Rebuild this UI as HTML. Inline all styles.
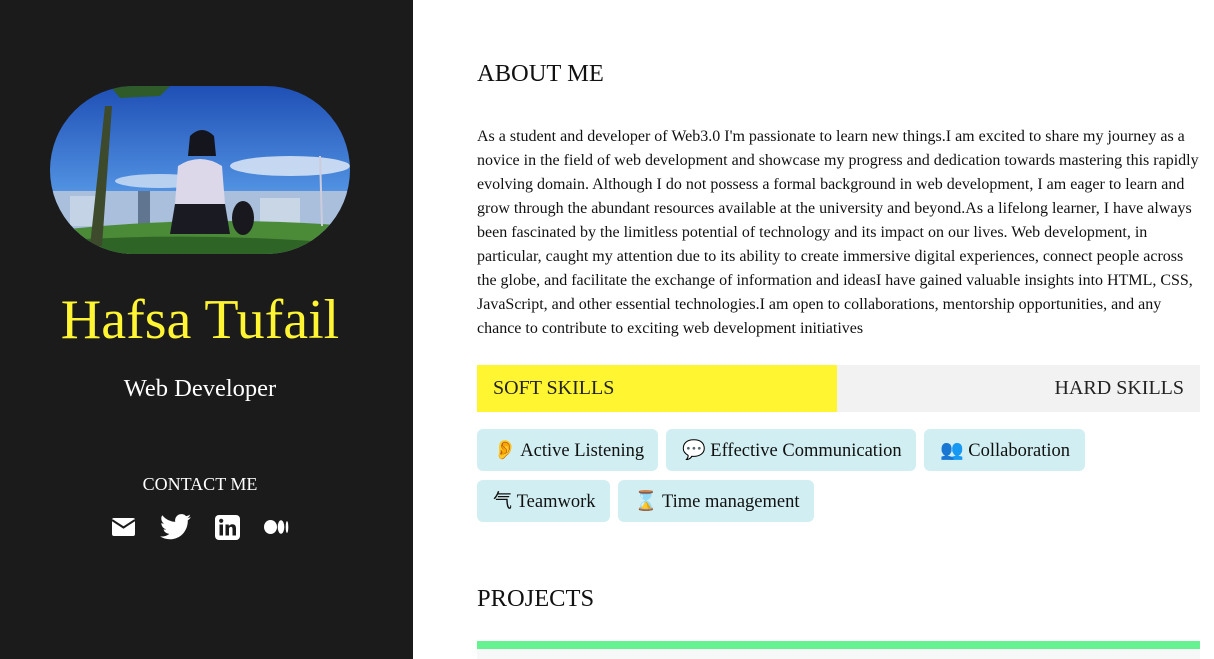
<!DOCTYPE html>
<html><head><meta charset="utf-8">
<style>
*{margin:0;padding:0;box-sizing:border-box}
body{width:1214px;height:659px;overflow:hidden;font-family:"Liberation Serif",serif;background:#fff;position:relative}
#side{position:absolute;left:0;top:0;width:413px;height:659px;background:#1b1b1b}
.pill{position:absolute;left:50px;top:86px;width:300px;height:168px;border-radius:84px;overflow:hidden}
.name{position:absolute;left:0;width:400px;top:285px;text-align:center;color:#fff533;font-size:56px;line-height:70px}
.role{position:absolute;left:0;width:400px;top:374px;text-align:center;color:#fff;font-size:24.5px;line-height:30px}
.contact{position:absolute;left:0;width:400px;top:473px;text-align:center;color:#fff;font-size:18px;line-height:22px}
.icons svg{position:absolute}
#main{position:absolute;left:477px;top:0;width:723px}
h2{font-weight:normal;font-size:24.5px;color:#111;position:absolute;left:0;line-height:30px}
p{position:absolute;left:0;top:125px;width:723px;font-size:16px;line-height:24px;color:#111}
.tabs{position:absolute;top:365px;left:0;width:723px;height:47px;background:#f2f2f2;font-size:20px}
.soft{position:absolute;left:0;top:0;width:360px;height:47px;background:#fff530;padding-left:16px;line-height:47px;color:#222}
.hard{position:absolute;right:16px;top:0;line-height:47px;color:#222}
.chip{position:absolute;height:42px;background:#d1eff2;border-radius:6px;font-size:18.5px;line-height:42px;padding:0 16px;color:#111;white-space:nowrap}
.emo{font-family:"Noto Color Emoji","DejaVu Sans","Noto Sans CJK SC",sans-serif;font-size:19px}
</style></head><body>
<div id="side">
<div class="pill">
<svg width="300" height="168" viewBox="0 0 300 168">
<defs><linearGradient id="sky" x1="0" y1="0" x2="0" y2="1"><stop offset="0" stop-color="#1f4fb5"/><stop offset="0.6" stop-color="#4f8fe0"/><stop offset="1" stop-color="#a6c8ee"/></linearGradient></defs>
<rect width="300" height="168" fill="url(#sky)"/>
<ellipse cx="240" cy="80" rx="60" ry="10" fill="#e6eef8" opacity=".8"/>
<ellipse cx="110" cy="95" rx="45" ry="7" fill="#e6eef8" opacity=".7"/>
<rect x="0" y="105" width="300" height="40" fill="#a9bfdc"/>
<rect x="88" y="105" width="12" height="40" fill="#5f7590"/>
<rect x="20" y="110" width="30" height="30" fill="#c4d3e6"/>
<rect x="210" y="112" width="40" height="30" fill="#c9d6e6"/>
<path d="M0 145 Q150 128 300 140 L300 168 L0 168Z" fill="#4b8a36"/>
<path d="M0 155 Q150 145 300 158 L300 168 L0 168Z" fill="#2f6427"/>
<path d="M40 160 L55 20 L62 20 L52 160Z" fill="#3d4a2c"/>
<path d="M60 0 L120 0 L110 10 L70 12Z" fill="#2f5a2a"/>
<path d="M140 50 Q152 38 164 50 L166 70 L138 70Z" fill="#15151d"/>
<path d="M128 80 Q150 66 172 80 L175 118 L125 118Z" fill="#dcd8ea"/>
<path d="M125 118 L175 118 L180 148 L120 148Z" fill="#1a1a22"/>
<ellipse cx="193" cy="132" rx="11" ry="17" fill="#18181e"/>
<path d="M270 70 L272 140" stroke="#ccd" stroke-width="2"/>
</svg>
</div>
<div class="name">Hafsa Tufail</div>
<div class="role">Web Developer</div>
<div class="contact">CONTACT ME</div>
<div class="icons">
<svg style="left:112px;top:518px" width="23" height="18" viewBox="0 0 23 18"><rect x="0" y="0" width="23" height="18" rx="2" fill="#fff"/><path d="M0 2 L11.5 9.5 L23 2" stroke="#1b1b1b" stroke-width="2" fill="none"/></svg>
<svg style="left:160px;top:514px" width="31" height="26" viewBox="0 0 24 20"><path fill="#fff" d="M24 2.4a9.8 9.8 0 0 1-2.8.8A4.9 4.9 0 0 0 23.3.4a9.9 9.9 0 0 1-3.1 1.2A4.9 4.9 0 0 0 11.8 6 14 14 0 0 1 1.7.9a4.9 4.9 0 0 0 1.5 6.6A4.9 4.9 0 0 1 1 6.9a4.9 4.9 0 0 0 3.9 4.9 4.9 4.9 0 0 1-2.2.1 4.9 4.9 0 0 0 4.6 3.4A9.9 9.9 0 0 1 0 17.3 14 14 0 0 0 7.5 19.5c9.1 0 14-7.5 14-14v-.6A10 10 0 0 0 24 2.4z"/></svg>
<svg style="left:215px;top:515px" width="25" height="25" viewBox="0 0 25 25"><rect width="25" height="25" rx="4" fill="#fff"/><rect x="4.5" y="9.5" width="3.5" height="11" fill="#1b1b1b"/><circle cx="6.2" cy="5.8" r="2.1" fill="#1b1b1b"/><path d="M10.5 9.5h3.3v1.6c.6-1 1.8-1.9 3.6-1.9 3 0 3.6 2 3.6 4.6v6.7h-3.5v-6c0-1.4-.1-2.6-1.6-2.6s-1.9 1.2-1.900 2.5v6.1h-3.5z" fill="#1b1b1b"/></svg>
<svg style="left:264px;top:519px" width="25" height="16" viewBox="0 0 25 16"><ellipse cx="6.5" cy="8" rx="6.5" ry="7" fill="#fff"/><ellipse cx="17" cy="8" rx="3.3" ry="6.7" fill="#fff"/><ellipse cx="23" cy="8" rx="1.3" ry="6" fill="#fff"/></svg>
</div>
</div>
<div id="main">
<h2 style="top:59px">ABOUT ME</h2>
<p>As a student and developer of Web3.0 I'm passionate to learn new things.I am excited to share my journey as a novice in the field of web development and showcase my progress and dedication towards mastering this rapidly evolving domain. Although I do not possess a formal background in web development, I am eager to learn and grow through the abundant resources available at the university and beyond.As a lifelong learner, I have always been fascinated by the limitless potential of technology and its impact on our lives. Web development, in particular, caught my attention due to its ability to create immersive digital experiences, connect people across the globe, and facilitate the exchange of information and ideasI have gained valuable insights into HTML, CSS, JavaScript, and other essential technologies.I am open to collaborations, mentorship opportunities, and any chance to contribute to exciting web development initiatives</p>
<div class="tabs"><div class="soft">SOFT SKILLS</div><div class="hard">HARD SKILLS</div></div>
<div class="chip" style="left:0;top:429px;width:181px"><span class="emo">👂</span> Active Listening</div>
<div class="chip" style="left:189px;top:429px;width:250px"><span class="emo">💬</span> Effective Communication</div>
<div class="chip" style="left:447px;top:429px;width:161px"><span class="emo">👥</span> Collaboration</div>
<div class="chip" style="left:0;top:480px;width:133px"><span class="emo">气</span> Teamwork</div>
<div class="chip" style="left:141px;top:480px;width:196px"><span class="emo">⌛</span> Time management</div>
<h2 style="top:584px">PROJECTS</h2>
<div style="position:absolute;left:0;top:641px;width:723px;height:8px;background:#66f291"></div>
<div style="position:absolute;left:0;top:649px;width:723px;height:10px;background:#f7f8f8"></div>
</div>
</body></html>
